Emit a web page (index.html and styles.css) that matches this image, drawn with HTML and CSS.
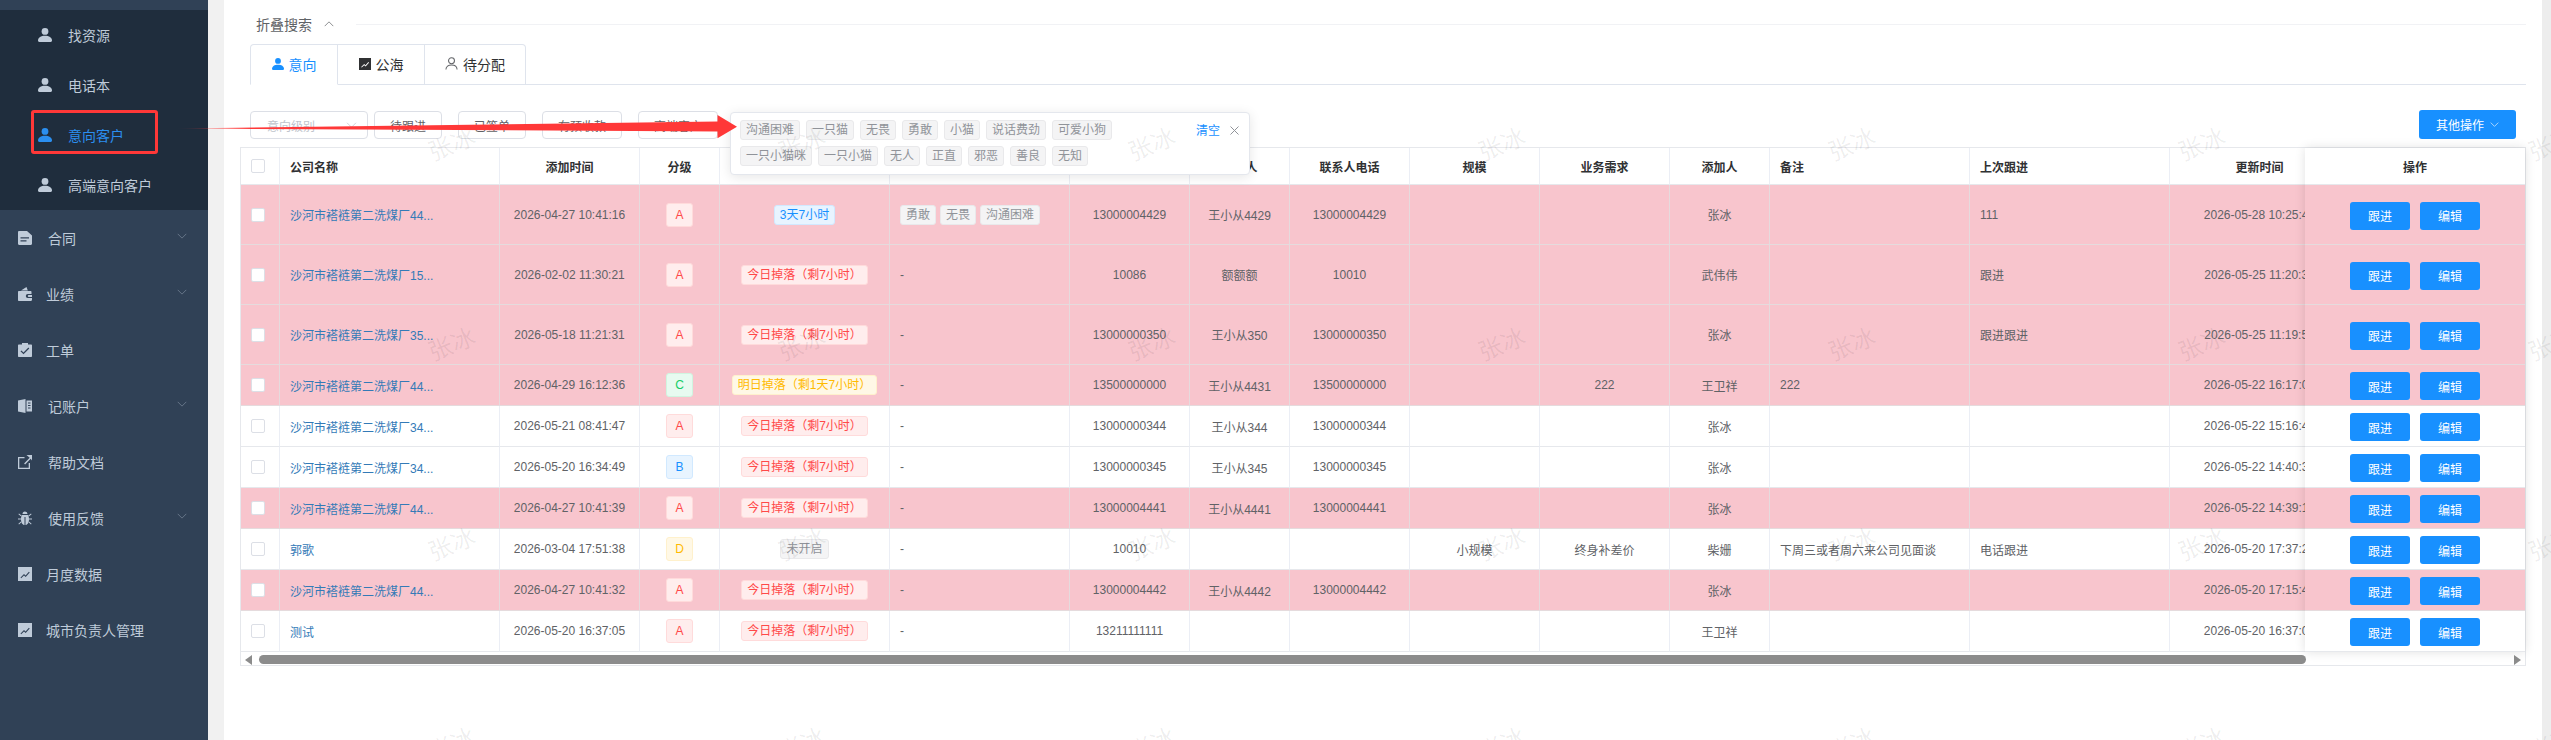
FILE: index.html
```html
<!DOCTYPE html>
<html lang="zh-CN">
<head>
<meta charset="utf-8">
<title>意向客户</title>
<link rel="stylesheet" href="styles.css">
</head>
<body>
<svg class="defs" width="0" height="0" aria-hidden="true">
  <defs>
    <symbol id="i-person" viewBox="0 0 14 14"><circle cx="7" cy="3.4" r="3.4"/><path d="M0 12.6C0 9.6 3 7.8 7 7.8s7 1.8 7 4.8c0 .9-.5 1.4-1.3 1.4H1.3C.5 14 0 13.5 0 12.6z"/></symbol>
    <symbol id="i-person-o" viewBox="0 0 14 14"><circle cx="7" cy="4" r="3.2" fill="none" stroke="currentColor" stroke-width="1.1"/><path d="M1 13.5c0-3.4 2.6-5 6-5s6 1.6 6 5" fill="none" stroke="currentColor" stroke-width="1.1"/></symbol>
    <symbol id="i-doc" viewBox="0 0 14 14"><path fill-rule="evenodd" d="M1.2 0H9l5 4.6v8.2c0 .7-.5 1.2-1.2 1.2H1.2C.5 14 0 13.500 0 12.800V1.200C0 .5.500 0 1.200 0zM2.500 6.300v1.200h8.500V6.300zm0 3v1.200h6V9.300z"/></symbol>
    <symbol id="i-wallet" viewBox="0 0 14 14"><path fill-rule="evenodd" d="M3 3.500 8.500 0l1.300 3.500zM.8 4h11.700c.6 0 1 .4 1 1v2h-3.700a2 2 0 0 0 0 4H14v1.800c0 .7-.4 1.200-1 1.200H.8C.3 14 0 13.700 0 13.200V4.800C0 4.300.3 4 .8 4zM10.800 8H14v2h-3.200a1 1 0 0 1 0-2z"/></symbol>
    <symbol id="i-clip" viewBox="0 0 14 14"><path fill-rule="evenodd" d="M4 0h6v1.500h3c.6 0 1 .4 1 1V13c0 .6-.4 1-1 1H1c-.6 0-1-.4-1-1V2.500c0-.6.400-1 1-1h3zM3.400 7.400l-.9.900 3 3 5.800-5.800-.9-.9-4.900 4.900z"/></symbol>
    <symbol id="i-book" viewBox="0 0 14 14"><path d="M0 1.500 7.500 0v14L0 12.500z"/><path fill-rule="evenodd" d="M8.500 1.500H14v11H8.500zM10 3.500v1h2.500v-1zm0 2.500v1h2.500V6zm0 2.500v1h2.500v-1z"/></symbol>
    <symbol id="i-link" viewBox="0 0 14 14"><path d="M0 2h6.500v1.300H1.300v9.400h9.400V8H12v6H0z"/><path d="M8.500 0H14v5.500l-1.300-1.700-5.600 5.600-1-1 5.600-5.600z"/></symbol>
    <symbol id="i-bug" viewBox="0 0 14 14"><path d="M4.500 3a2.500 2.500 0 0 1 5 0zM3.800 4h6.400c.5 1 .8 2.500.8 4.500 0 3-1.600 5.500-3.500 5.500V6H6.500v8C4.600 14 3 11.500 3 8.500c0-2 .3-3.500.8-4.500z"/><path d="M1 2.500l2.500 2-.6.800-2.500-2zM13 2.500l.6.800-2.500 2-.6-.8zM0 7.500h3v1H0zM11 7.500h3v1h-3zM3 10.500l.5.800L1 13.500l-.6-.8zM11 10.500l2.600 2.200-.6.800-2.500-2.200z"/></symbol>
    <symbol id="i-chart" viewBox="0 0 14 14"><path fill-rule="evenodd" d="M0 0h14v14H0zM2.500 10.500l.7.700 2.800-2.800 1.700 1.500 4-4.500-.8-.6-3.300 3.700-1.600-1.500z"/></symbol>
    <symbol id="i-down" viewBox="0 0 14 8"><path d="M1 1l6 6 6-6" fill="none" stroke="currentColor" stroke-width="1"/></symbol>
    <symbol id="i-up" viewBox="0 0 14 8"><path d="M1 7l6-6 6 6" fill="none" stroke="currentColor" stroke-width="1"/></symbol>
    <symbol id="i-close" viewBox="0 0 9 9"><path d="M.5.500l8 8M8.500.500l-8 8" fill="none" stroke="currentColor" stroke-width="1"/></symbol>
  </defs>
</svg>

<div class="app">
  <aside class="sidebar">
    <div class="side-strip"></div>
    <ul class="submenu">
      <li class="sub-item"><svg class="ico"><use href="#i-person"/></svg>找资源</li>
      <li class="sub-item"><svg class="ico"><use href="#i-person"/></svg>电话本</li>
      <li class="sub-item active"><svg class="ico"><use href="#i-person"/></svg>意向客户</li>
      <li class="sub-item"><svg class="ico"><use href="#i-person"/></svg>高端意向客户</li>
    </ul>
    <ul class="menu">
      <li class="menu-item"><svg class="ico"><use href="#i-doc"/></svg><span class="label">合同</span><svg class="caret"><use href="#i-down"/></svg></li>
      <li class="menu-item tight"><svg class="ico"><use href="#i-wallet"/></svg><span class="label">业绩</span><svg class="caret"><use href="#i-down"/></svg></li>
      <li class="menu-item tight"><svg class="ico"><use href="#i-clip"/></svg><span class="label">工单</span></li>
      <li class="menu-item"><svg class="ico"><use href="#i-book"/></svg><span class="label">记账户</span><svg class="caret"><use href="#i-down"/></svg></li>
      <li class="menu-item"><svg class="ico"><use href="#i-link"/></svg><span class="label">帮助文档</span></li>
      <li class="menu-item"><svg class="ico"><use href="#i-bug"/></svg><span class="label">使用反馈</span><svg class="caret"><use href="#i-down"/></svg></li>
      <li class="menu-item tight"><svg class="ico"><use href="#i-chart"/></svg><span class="label">月度数据</span></li>
      <li class="menu-item tight"><svg class="ico"><use href="#i-chart"/></svg><span class="label">城市负责人管理</span></li>
    </ul>
  </aside>
  <div class="gutter"></div>

  <main class="main">
    <div class="search-row">
      <span class="search-title">折叠搜索</span>
      <svg class="search-caret"><use href="#i-up"/></svg>
      <span class="search-line"></span>
    </div>

    <div class="tabs">
      <div class="tab active"><svg class="tab-ico"><use href="#i-person"/></svg>意向</div>
      <div class="tab dark"><svg class="tab-ico"><use href="#i-chart"/></svg>公海</div>
      <div class="tab wide"><svg class="tab-ico thin"><use href="#i-person-o"/></svg>待分配</div>
    </div>

    <div class="toolbar">
      <div class="select"><span>意向级别</span><svg class="select-caret"><use href="#i-down"/></svg></div>
      <button class="fbtn w68 first">待跟进</button>
      <button class="fbtn w68">已签单</button>
      <button class="fbtn w80">有预收款</button>
      <button class="fbtn w80">高端客户</button>
      <button class="other">其他操作<svg class="other-caret"><use href="#i-down"/></svg></button>

      <div class="popover">
        <div class="pop-tags">
          <div class="pop-row"><span class="tag">沟通困难</span><span class="tag">一只猫</span><span class="tag">无畏</span><span class="tag">勇敢</span><span class="tag">小猫</span><span class="tag">说话费劲</span><span class="tag">可爱小狗</span></div>
          <div class="pop-row"><span class="tag">一只小猫咪</span><span class="tag">一只小猫</span><span class="tag">无人</span><span class="tag">正直</span><span class="tag">邪恶</span><span class="tag">善良</span><span class="tag">无知</span></div>
        </div>
        <a class="pop-clear">清空</a>
        <svg class="pop-close"><use href="#i-close"/></svg>
      </div>
    </div>

    <div class="table-wrap">
      <div class="table-scroll">
        <table class="grid">
          <colgroup>
            <col class="c39"><col class="c220"><col class="c140"><col class="c80"><col class="c170"><col class="c180"><col class="c120"><col class="c100"><col class="c120"><col class="c130"><col class="c130"><col class="c100"><col class="c200"><col class="c200"><col class="c180"><col class="c220">
          </colgroup>
          <thead>
            <tr>
              <th class="left"><span class="check"></span></th><th class="left">公司名称</th><th>添加时间</th><th>分级</th><th>掉落时间</th><th class="left">标签</th><th>手机号</th><th>联系人</th><th>联系人电话</th><th>规模</th><th>业务需求</th><th>添加人</th><th class="left">备注</th><th class="left">上次跟进</th><th>更新时间</th><th>操作</th>
            </tr>
          </thead>
          <tbody>
            <tr class="tall pink">
              <td class="left"><span class="check"></span></td><td class="left"><a class="name">沙河市褡裢第二洗煤厂44...</a></td><td>2026-04-27 10:41:16</td><td><span class="tag grade red">A</span></td><td><span class="tag blue">3天7小时</span></td>
              <td class="left"><span class="tag-row"><span class="tag">勇敢</span><span class="tag">无畏</span><span class="tag">沟通困难</span></span></td><td>13000004429</td><td>王小从4429</td><td>13000004429</td><td></td><td></td><td>张冰</td><td class="left"></td><td class="left">111</td><td>2026-05-28 10:25:46</td><td></td>
            </tr>
            <tr class="tall pink">
              <td class="left"><span class="check"></span></td><td class="left"><a class="name">沙河市褡裢第二洗煤厂15...</a></td><td>2026-02-02 11:30:21</td><td><span class="tag grade red">A</span></td><td><span class="tag red">今日掉落（剩7小时）</span></td>
              <td class="left">-</td><td>10086</td><td>额额额</td><td>10010</td><td></td><td></td><td>武伟伟</td><td class="left"></td><td class="left">跟进</td><td>2026-05-25 11:20:31</td><td></td>
            </tr>
            <tr class="tall pink">
              <td class="left"><span class="check"></span></td><td class="left"><a class="name">沙河市褡裢第二洗煤厂35...</a></td><td>2026-05-18 11:21:31</td><td><span class="tag grade red">A</span></td><td><span class="tag red">今日掉落（剩7小时）</span></td>
              <td class="left">-</td><td>13000000350</td><td>王小从350</td><td>13000000350</td><td></td><td></td><td>张冰</td><td class="left"></td><td class="left">跟进跟进</td><td>2026-05-25 11:19:52</td><td></td>
            </tr>
            <tr class="pink">
              <td class="left"><span class="check"></span></td><td class="left"><a class="name">沙河市褡裢第二洗煤厂44...</a></td><td>2026-04-29 16:12:36</td><td><span class="tag grade green">C</span></td><td><span class="tag yellow">明日掉落（剩1天7小时）</span></td>
              <td class="left">-</td><td>13500000000</td><td>王小从4431</td><td>13500000000</td><td></td><td>222</td><td>王卫祥</td><td class="left">222</td><td class="left"></td><td>2026-05-22 16:17:03</td><td></td>
            </tr>
            <tr>
              <td class="left"><span class="check"></span></td><td class="left"><a class="name">沙河市褡裢第二洗煤厂34...</a></td><td>2026-05-21 08:41:47</td><td><span class="tag grade red">A</span></td><td><span class="tag red">今日掉落（剩7小时）</span></td>
              <td class="left">-</td><td>13000000344</td><td>王小从344</td><td>13000000344</td><td></td><td></td><td>张冰</td><td class="left"></td><td class="left"></td><td>2026-05-22 15:16:42</td><td></td>
            </tr>
            <tr>
              <td class="left"><span class="check"></span></td><td class="left"><a class="name">沙河市褡裢第二洗煤厂34...</a></td><td>2026-05-20 16:34:49</td><td><span class="tag grade blue">B</span></td><td><span class="tag red">今日掉落（剩7小时）</span></td>
              <td class="left">-</td><td>13000000345</td><td>王小从345</td><td>13000000345</td><td></td><td></td><td>张冰</td><td class="left"></td><td class="left"></td><td>2026-05-22 14:40:31</td><td></td>
            </tr>
            <tr class="pink">
              <td class="left"><span class="check"></span></td><td class="left"><a class="name">沙河市褡裢第二洗煤厂44...</a></td><td>2026-04-27 10:41:39</td><td><span class="tag grade red">A</span></td><td><span class="tag red">今日掉落（剩7小时）</span></td>
              <td class="left">-</td><td>13000004441</td><td>王小从4441</td><td>13000004441</td><td></td><td></td><td>张冰</td><td class="left"></td><td class="left"></td><td>2026-05-22 14:39:12</td><td></td>
            </tr>
            <tr>
              <td class="left"><span class="check"></span></td><td class="left"><a class="name">郭歌</a></td><td>2026-03-04 17:51:38</td><td><span class="tag grade yellow">D</span></td><td><span class="tag">未开启</span></td>
              <td class="left">-</td><td>10010</td><td></td><td></td><td>小规模</td><td>终身补差价</td><td>柴姗</td><td class="left">下周三或者周六来公司见面谈</td><td class="left">电话跟进</td><td>2026-05-20 17:37:20</td><td></td>
            </tr>
            <tr class="pink">
              <td class="left"><span class="check"></span></td><td class="left"><a class="name">沙河市褡裢第二洗煤厂44...</a></td><td>2026-04-27 10:41:32</td><td><span class="tag grade red">A</span></td><td><span class="tag red">今日掉落（剩7小时）</span></td>
              <td class="left">-</td><td>13000004442</td><td>王小从4442</td><td>13000004442</td><td></td><td></td><td>张冰</td><td class="left"></td><td class="left"></td><td>2026-05-20 17:15:44</td><td></td>
            </tr>
            <tr>
              <td class="left"><span class="check"></span></td><td class="left"><a class="name">测试</a></td><td>2026-05-20 16:37:05</td><td><span class="tag grade red">A</span></td><td><span class="tag red">今日掉落（剩7小时）</span></td>
              <td class="left">-</td><td>13211111111</td><td></td><td></td><td></td><td></td><td>王卫祥</td><td class="left"></td><td class="left"></td><td>2026-05-20 16:37:05</td><td></td>
            </tr>
          </tbody>
        </table>
      </div>

      <div class="fixed-col">
        <table class="grid fixed-grid">
          <thead><tr><th>操作</th></tr></thead>
          <tbody>
            <tr class="tall pink"><td><button class="act">跟进</button><button class="act">编辑</button></td></tr>
            <tr class="tall pink"><td><button class="act">跟进</button><button class="act">编辑</button></td></tr>
            <tr class="tall pink"><td><button class="act">跟进</button><button class="act">编辑</button></td></tr>
            <tr class="pink"><td><button class="act">跟进</button><button class="act">编辑</button></td></tr>
            <tr><td><button class="act">跟进</button><button class="act">编辑</button></td></tr>
            <tr><td><button class="act">跟进</button><button class="act">编辑</button></td></tr>
            <tr class="pink"><td><button class="act">跟进</button><button class="act">编辑</button></td></tr>
            <tr><td><button class="act">跟进</button><button class="act">编辑</button></td></tr>
            <tr class="pink"><td><button class="act">跟进</button><button class="act">编辑</button></td></tr>
            <tr><td><button class="act">跟进</button><button class="act">编辑</button></td></tr>
          </tbody>
        </table>
      </div>

      <div class="scrollbar">
        <span class="sb-left"></span>
        <span class="sb-thumb"></span>
        <span class="sb-right"></span>
      </div>
    </div>
  </main>
  <div class="gutter-right"></div>

  <div class="watermark" aria-hidden="true">
    <span>张冰</span><span>张冰</span><span>张冰</span><span>张冰</span><span>张冰</span><span>张冰</span><span>张冰</span>
    <span>张冰</span><span>张冰</span><span>张冰</span><span>张冰</span><span>张冰</span><span>张冰</span><span>张冰</span>
    <span>张冰</span><span>张冰</span><span>张冰</span><span>张冰</span><span>张冰</span><span>张冰</span><span>张冰</span>
    <span>张冰</span><span>张冰</span><span>张冰</span><span>张冰</span><span>张冰</span><span>张冰</span><span>张冰</span>
  </div>

  <div class="mark-box"></div>
  <svg class="mark-arrow" viewBox="0 0 800 160" aria-hidden="true">
    <defs>
      <linearGradient id="arrow-fade" gradientUnits="userSpaceOnUse" x1="175" y1="0" x2="250" y2="0">
        <stop offset="0" stop-color="#ff3838" stop-opacity="0"/>
        <stop offset="1" stop-color="#ff3838"/>
      </linearGradient>
    </defs>
    <polygon fill="url(#arrow-fade)" points="175,128.500 717.500,121.500 717.500,115 737,126.700 717.500,138.300 717.500,131.500"/>
  </svg>
</div>
</body>
</html>
```
FILE: styles.css
```css
* { box-sizing: border-box; }
html, body { margin: 0; padding: 0; height: 740px; overflow: hidden; }
body { font-family: "Liberation Sans", "Noto Sans CJK SC", sans-serif; font-size: 12px; color: #606266; background: #fff; }
ul { list-style: none; margin: 0; padding: 0; }
button { font-family: inherit; cursor: pointer; }
.defs { position: absolute; }

.app { position: relative; display: flex; width: 2551px; height: 740px; overflow: hidden; }

/* sidebar */
.sidebar { position: relative; z-index: 3; flex: 0 0 208px; background: #304156; color: #bfcbd9; font-size: 14px; }
.side-strip { height: 10px; }
.submenu { background: #1f2d3d; }
.sub-item { display: flex; align-items: center; height: 50px; padding-left: 38px; }
.sub-item .ico { margin-right: 16px; }
.sub-item.active { color: #2b8ff0; }
.ico { width: 14px; height: 14px; flex: none; fill: currentColor; }
.menu-item { position: relative; display: flex; align-items: center; height: 56px; padding: 0 20px 0 18px; }
.menu-item .ico { margin-right: 16px; }
.menu-item.tight .ico { margin-right: 14px; }
.label { flex: 1; }
.caret { width: 10px; height: 6px; color: #7b8a9c; margin-top: -4px; margin-right: 1px; }

.gutter { flex: 0 0 16px; background: #f1f1f1; }
.gutter-right { flex: 0 0 9px; background: #ededed; }

/* main */
.main { flex: 1; min-width: 0; padding: 0 16px; background: #fff; }

.search-row { display: flex; align-items: center; height: 44px; padding: 4px 0 0 16px; font-size: 14px; color: #606266; }
.search-title { font-size: 14px; }
.search-caret { width: 10px; height: 6px; margin-left: 12px; color: #606266; }
.search-line { flex: 1; height: 1px; margin-left: 22px; background: #f1f2f5; }

.tabs { display: flex; height: 41px; margin-left: 10px; border-bottom: 1px solid #dfe4ed; }
.tab { display: flex; align-items: center; justify-content: center; width: 87px; height: 41px; margin-bottom: -1px; padding-bottom: 2px; border: 1px solid #dfe4ed; border-left: 0; font-size: 14px; color: #303133; background: #fff; }
.tab.active { width: 88px; border-left: 1px solid #dfe4ed; border-bottom-color: #fff; border-radius: 4px 0 0 0; color: #1890ff; }
.tab.wide { width: 101px; border-radius: 0 4px 0 0; }
.tab-ico { width: 12px; height: 12px; margin-right: 5px; fill: currentColor; }
.tab.wide .tab-ico { width: 13px; height: 13px; color: #606266; fill: none; }

.toolbar { position: relative; display: flex; align-items: flex-end; height: 29px; margin-top: 25px; padding-left: 10px; }
.select { display: flex; align-items: center; justify-content: space-between; width: 118px; height: 28px; padding: 0 10px 0 16px; border: 1px solid #dcdfe6; border-radius: 4px; color: #c0c4cc; }
.select-caret { width: 11px; height: 6px; color: #c0c4cc; }
.fbtn { height: 28px; padding: 0; margin-left: 16px; border: 1px solid #dcdfe6; border-radius: 4px; background: #fff; color: #606266; font-size: 12px; }
.fbtn.first { margin-left: 6px; }
.w68 { width: 68px; }
.w80 { width: 80px; }
.other { display: flex; align-items: center; justify-content: center; width: 97px; height: 29px; margin-left: auto; margin-right: 10px; padding: 0; border: 0; border-radius: 3px; background: #1890ff; color: #fff; font-size: 12px; }
.other-caret { width: 9px; height: 5px; margin-left: 6px; color: #fff; }

.popover { position: absolute; z-index: 2; left: 490px; top: 2px; display: flex; align-items: flex-start; width: 520px; height: 63px; padding: 7px 11px 0 9px; background: #fff; border: 1px solid #e4e7ed; border-radius: 4px; box-shadow: 0 2px 12px rgba(0, 0, 0, .1); }
.pop-tags { display: flex; flex: 0 0 456px; flex-direction: column; gap: 6px; }
.pop-row { display: flex; gap: 6px; }
.pop-clear { flex: none; margin-top: 3px; color: #1890ff; font-size: 12px; line-height: 16px; white-space: nowrap; }
.pop-close { flex: none; width: 9px; height: 9px; margin: 6px 0 0 10px; color: #909399; }

.tag { display: inline-block; height: 20px; padding: 0 5px; border: 1px solid #e9e9eb; border-radius: 3px; background: #f4f4f5; color: #909399; font-size: 12px; line-height: 18px; white-space: nowrap; vertical-align: middle; }
.tag-row { display: inline-flex; gap: 4px; vertical-align: middle; }
.tag.red { color: #ff4949; background: #ffeded; border-color: #ffdbdb; }
.tag.blue { color: #1890ff; background: #e8f4ff; border-color: #d1e9ff; }
.tag.green { color: #13ce66; background: #e7faf0; border-color: #d0f5e0; }
.tag.yellow { color: #ffba00; background: #fff8e6; border-color: #fff1cc; }
.tag.grade { height: 24px; padding: 0 8px; line-height: 22px; }

/* table */
.table-wrap { position: relative; width: 2286px; margin-top: 8px; border: 1px solid #e6e8ec; }
.table-scroll { overflow: hidden; }
.grid { border-collapse: separate; border-spacing: 0; table-layout: fixed; width: 2329px; background: #fff; }
.c39 { width: 39px; } .c80 { width: 80px; } .c100 { width: 100px; } .c120 { width: 120px; } .c130 { width: 130px; } .c140 { width: 140px; } .c170 { width: 170px; } .c180 { width: 180px; } .c200 { width: 200px; } .c220 { width: 220px; }
.grid th, .grid td { height: 41px; padding: 0 10px; border-right: 1px solid #ebeef5; border-bottom: 1px solid #e6e8ec; text-align: center; font-size: 12px; white-space: nowrap; overflow: hidden; }
.grid th { height: 37px; color: #303133; font-weight: 700; }
.grid tr.tall td { height: 60px; }
.grid tr.pink td { background: #f8c5cd; border-color: #e5dbdd; }
.grid .left { text-align: left; }
.check { display: block; width: 14px; height: 14px; background: #fff; border: 1px solid #dcdfe6; border-radius: 2px; }
.name { color: #337ab7; }

.fixed-col { position: absolute; top: 0; right: 0; width: 220px; background: #fff; box-shadow: 0 0 10px rgba(0, 0, 0, .12); }
.fixed-grid { width: 220px; }
.fixed-grid th, .fixed-grid td { border-right: 0; padding: 0; }
.act { width: 60px; height: 28px; margin-top: 2px; padding: 0; border: 0; border-radius: 3px; background: #1890ff; color: #fff; font-size: 12px; vertical-align: middle; }
.act + .act { margin-left: 10px; }

.scrollbar { display: flex; align-items: center; height: 13px; padding-top: 2px; background: #fff; }
.sb-left { width: 0; height: 0; margin-left: 4px; border-style: solid; border-width: 5px 7px 5px 0; border-color: transparent #8c8c8c transparent transparent; }
.sb-thumb { width: 2047px; height: 9px; margin-left: 7px; border-radius: 5px; background: #8c8c8c; }
.sb-right { width: 0; height: 0; margin-left: auto; margin-right: 4px; border-style: solid; border-width: 5px 0 5px 7px; border-color: transparent transparent transparent #8c8c8c; }

/* overlays */
.watermark { position: absolute; z-index: 2; left: 276px; top: 42px; display: grid; grid-template-columns: repeat(7, 350px); grid-auto-rows: 200px; pointer-events: none; }
.watermark span { display: flex; align-items: center; justify-content: center; color: rgba(0, 0, 0, .07); font-size: 24px; transform: rotate(-22deg); }

.mark-box { position: absolute; z-index: 4; left: 31px; top: 110px; width: 127px; height: 44px; border: 3px solid #ff3838; border-radius: 3px; }
.mark-arrow { position: absolute; z-index: 5; left: 0; top: 0; width: 800px; height: 160px; pointer-events: none; }
```
